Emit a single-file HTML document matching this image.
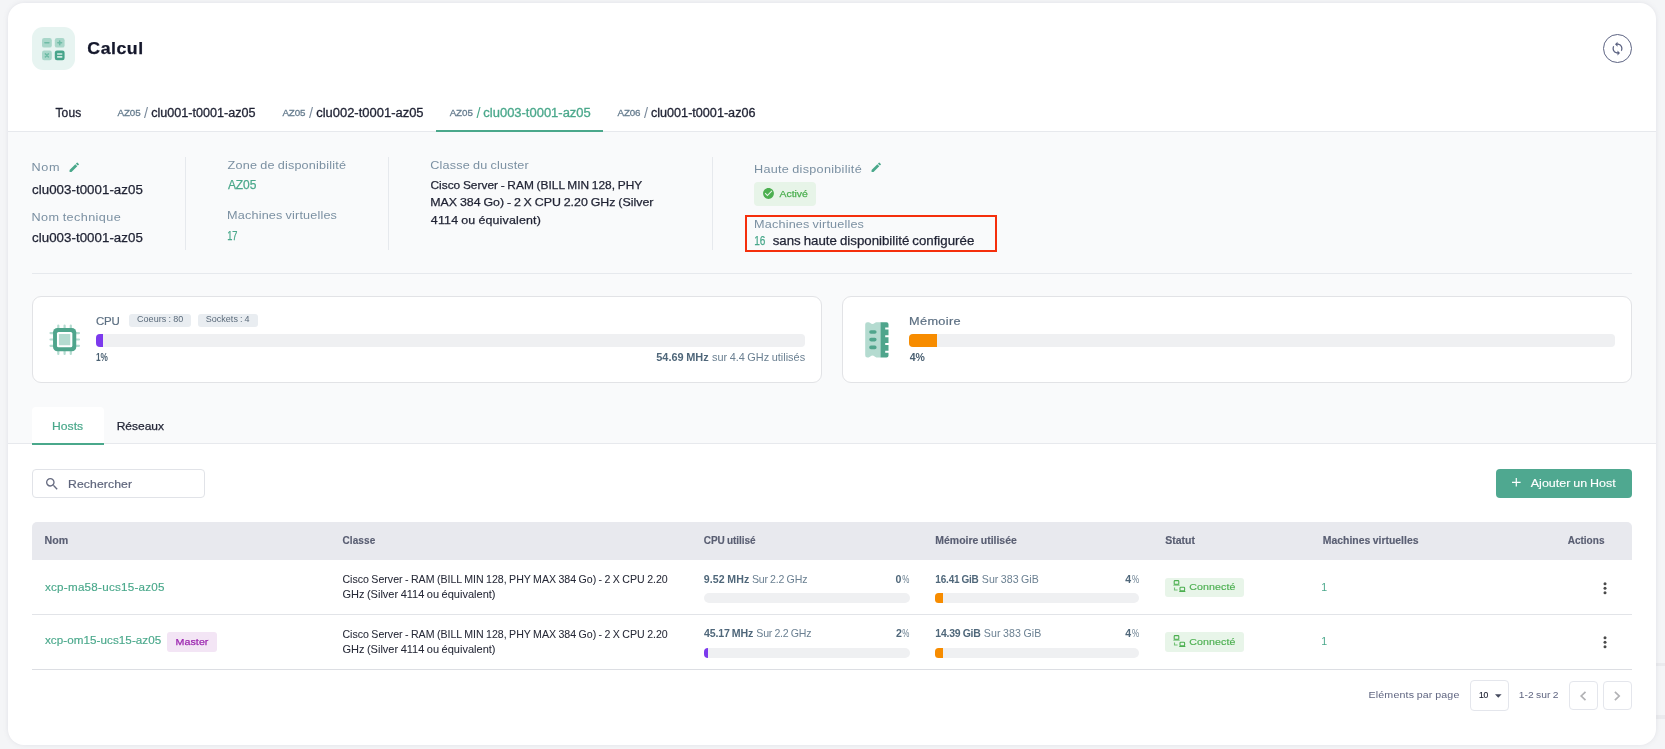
<!DOCTYPE html>
<html lang="fr"><head><meta charset="utf-8"><title>Calcul</title>
<style>
html,body{margin:0;padding:0}
body{width:1665px;height:749px;overflow:hidden;position:relative;background:#f4f5f7;font-family:"Liberation Sans",sans-serif}
.t{position:absolute;transform-origin:0 0;word-spacing:-0.05em;white-space:pre;line-height:20px;height:20px;font-family:"Liberation Sans",sans-serif}
.b{position:absolute;box-sizing:border-box}
svg{position:absolute;overflow:visible}
.txt{position:absolute;left:0;top:0;width:1665px;height:749px;will-change:transform}

</style></head><body>
<!-- page background decoration -->
<div class="b" style="left:0;top:0;width:1665px;height:749px;background:#f4f5f7"></div>
<div class="b" style="left:1650px;top:662.7px;width:15px;height:3.3px;background:#eaebee"></div>
<div class="b" style="left:1650px;top:715.4px;width:15px;height:3.4px;background:#eaebee"></div>
<!-- main card -->
<div class="b" style="left:7.75px;top:3.2px;width:1648.25px;height:741.6px;border-radius:16px;background:#fff;box-shadow:0 0 5px rgba(105,110,135,.13);overflow:hidden">
  <div class="b" style="left:0;top:128px;width:1648px;height:313px;background:#f9fafb;border-top:1px solid #e7e9ed;border-bottom:1px solid #e7e9ed"></div>
</div>
<!-- header icon -->
<div class="b" style="left:32px;top:27px;width:43px;height:43px;border-radius:11px;background:#e7f4f1"></div>
<svg style="left:42px;top:38px" width="23" height="23" viewBox="0 0 23 23">
  <rect x="0" y="0" width="9.8" height="9.6" rx="2.2" fill="#a9d7ca"/>
  <rect x="12.8" y="0" width="9.8" height="9.6" rx="2.2" fill="#a9d7ca"/>
  <rect x="0" y="12.6" width="9.8" height="9.6" rx="2.2" fill="#a9d7ca"/>
  <rect x="12.8" y="12.6" width="9.8" height="9.6" rx="2.2" fill="#48a58b"/>
  <path d="M2.9 4.8h4" stroke="#6fbca6" stroke-width="1.5" stroke-linecap="round"/>
  <path d="M15.8 4.8h3.8M17.7 2.900v3.800" stroke="#6fbca6" stroke-width="1.5" stroke-linecap="round"/>
  <path d="M3.400 15.900l3 3M6.400 15.900l-3 3" stroke="#6fbca6" stroke-width="1.5" stroke-linecap="round"/>
  <path d="M15.700 16h4M15.700 18.900h4" stroke="#d3ece5" stroke-width="1.6" stroke-linecap="round"/>
</svg>
<!-- refresh button -->
<div class="b" style="left:1603px;top:34px;width:29px;height:29px;border-radius:50%;border:1px solid #5d6483"></div>
<svg style="left:1610.1px;top:40.7px" width="15" height="15" viewBox="0 0 24 24"><path fill="#5d6483" d="M12 4V1L8 5l4 4V6c3.31 0 6 2.69 6 6 0 1.01-.25 1.97-.7 2.8l1.46 1.46C19.54 15.03 20 13.57 20 12c0-4.42-3.58-8-8-8zm0 14c-3.31 0-6-2.69-6-6 0-1.01.25-1.97.7-2.8L5.24 7.74C4.46 8.97 4 10.43 4 12c0 4.42 3.58 8 8 8v3l4-4-4-4v3z"/></svg>
<!-- active tab underline -->
<div class="b" style="left:436.25px;top:130px;width:166.75px;height:2px;background:#4aa88b"></div>
<!-- info dividers -->
<div class="b" style="left:185px;top:157px;width:1px;height:92.5px;background:#e6e9ed"></div>
<div class="b" style="left:388.25px;top:157px;width:1px;height:92.5px;background:#e6e9ed"></div>
<div class="b" style="left:712px;top:157px;width:1px;height:92.5px;background:#e6e9ed"></div>
<div class="b" style="left:32px;top:273px;width:1600px;height:1px;background:#e6e9ed"></div>
<!-- pencils -->
<svg style="left:67.5px;top:161.3px" width="12.5" height="12.5" viewBox="0 0 24 24"><path fill="#4aa88b" d="M3 17.25V21h3.75L17.81 9.94l-3.75-3.75L3 17.25zM20.71 7.04a.996.996 0 0 0 0-1.41l-2.34-2.34a.996.996 0 0 0-1.41 0l-1.83 1.83 3.75 3.75 1.83-1.83z"/></svg>
<svg style="left:869.5px;top:161.3px" width="12.5" height="12.5" viewBox="0 0 24 24"><path fill="#4aa88b" d="M3 17.25V21h3.75L17.81 9.94l-3.75-3.75L3 17.25zM20.71 7.04a.996.996 0 0 0 0-1.41l-2.34-2.34a.996.996 0 0 0-1.41 0l-1.83 1.83 3.75 3.75 1.83-1.83z"/></svg>
<!-- Activé badge -->
<div class="b" style="left:754.25px;top:182px;width:61.75px;height:24px;border-radius:4px;background:#e7f4e8"></div>
<svg style="left:762.4px;top:186.7px" width="13" height="13" viewBox="0 0 24 24"><path fill="#4caf50" d="M12 2C6.48 2 2 6.48 2 12s4.48 10 10 10 10-4.48 10-10S17.52 2 12 2zm-2 15l-5-5 1.41-1.41L10 14.17l7.59-7.59L19 8l-9 9z"/></svg>
<!-- red highlight box -->
<div class="b" style="left:745px;top:215px;width:252.25px;height:36.75px;border:2px solid #f52f0c"></div>
<!-- CPU card -->
<div class="b" style="left:32px;top:296px;width:790px;height:86.5px;border:1px solid #e2e3e6;border-radius:9px;background:#fff"></div>
<div class="b" style="left:842px;top:296px;width:790.25px;height:86.5px;border:1px solid #e2e3e6;border-radius:9px;background:#fff"></div>
<!-- CPU icon -->
<svg style="left:48.75px;top:323.75px" width="31.25" height="31.25" viewBox="0 0 31.25 31.25">
  <g stroke="#b4dbd0" stroke-width="2.2" stroke-linecap="round">
    <path d="M9.3 1.5v3M15.6 1.5v3M21.8 1.5v3M9.3 27v3M15.6 27v3M21.8 27v3"/>
    <path d="M1.5 9.1h3M1.5 15.5h3M1.5 21.8h3M27 9.1h3M27 15.5h3M27 21.8h3"/>
  </g>
  <rect x="4.05" y="4.05" width="23.2" height="23.2" rx="4.3" fill="#4fa58c"/>
  <rect x="7.95" y="7.95" width="15.4" height="15.4" rx="1.6" fill="#fff"/>
  <rect x="9.95" y="9.95" width="11.3" height="11.3" rx=".6" fill="#b4dbd0"/>
</svg>
<!-- CPU badges -->
<div class="b" style="left:129px;top:314px;width:62.25px;height:12.75px;border-radius:3px;background:#e9edf1"></div>
<div class="b" style="left:198px;top:314px;width:60px;height:12.75px;border-radius:3px;background:#e9edf1"></div>
<!-- CPU progress -->
<div class="b" style="left:96px;top:334.25px;width:709px;height:12.5px;border-radius:4px;background:#eff0f2;overflow:hidden"><div style="width:7px;height:100%;background:#7c3aed"></div></div>
<!-- Memory icon -->
<svg style="left:864.5px;top:321.5px" width="24" height="36" viewBox="0 0 24 36">
  <path d="M0.2 2.4Q0.2 0.2 2.4 0.2L3.6 0.2Q4.600 0.2 5.3 1Q7.5 3 9.7 1Q10.4 0.2 11.4 0.2L15.6 0.2L15.6 35.400L11.4 35.4Q10.4 35.4 9.7 34.6Q7.5 32.6 5.3 34.6Q4.6 35.4 3.6 35.4L2.4 35.4Q0.2 35.4 0.2 33.2Z" fill="#b4dbd0"/>
  <path d="M15.5 0.2H21.5Q23.5 0.2 23.5 2.2V5.5H20.2V7.5H23.5V13.2H20.2V15.2H23.5V21H20.2V23H23.5V28.7H20.2V30.7H23.5V33.4Q23.5 35.4 21.5 35.4H15.5Z" fill="#4fa58c"/>
  <g stroke="#4fa58c" stroke-width="3.6" stroke-linecap="round"><path d="M6 10h3.800M6 17.600h3.800M6 25.400h3.800"/></g>
</svg>
<!-- Memory progress -->
<div class="b" style="left:909.25px;top:334.25px;width:706px;height:12.5px;border-radius:4px;background:#eff0f2;overflow:hidden"><div style="width:28px;height:100%;background:#f78c00"></div></div>
<!-- sub tabs -->
<div class="b" style="left:32px;top:407px;width:72px;height:37px;border-radius:4px 4px 0 0;background:#fff"></div>
<div class="b" style="left:32px;top:442.5px;width:72px;height:2.5px;background:#4aa88b"></div>
<!-- search -->
<div class="b" style="left:32px;top:469.25px;width:173px;height:28.5px;border:1px solid #e1e3e8;border-radius:4px;background:#fff"></div>
<svg style="left:43.8px;top:475.8px" width="16" height="16" viewBox="0 0 24 24"><path fill="#666b80" d="M15.5 14h-.79l-.28-.27A6.471 6.471 0 0 0 16 9.5 6.5 6.5 0 1 0 9.500 16c1.610 0 3.090-.59 4.230-1.570l.27.28v.79l5 4.990L20.490 19l-4.990-5zm-6 0C7.010 14 5 11.990 5 9.500S7.010 5 9.500 5 14 7.010 14 9.500 11.990 14 9.500 14z"/></svg>
<!-- add button -->
<div class="b" style="left:1496px;top:469px;width:136.25px;height:29px;border-radius:4px;background:#4fa890"></div>
<svg style="left:1512px;top:477.9px" width="8.6" height="8.6" viewBox="0 0 8.6 8.6"><path d="M4.3 0v8.6M0 4.3h8.6" stroke="#fff" stroke-width="1.2"/></svg>
<!-- table header -->
<div class="b" style="left:32px;top:522px;width:1600.25px;height:37.5px;border-radius:5px 5px 0 0;background:#e8e9ee"></div>
<div class="b" style="left:32px;top:614px;width:1600px;height:1px;background:#e2e4e8"></div>
<div class="b" style="left:32px;top:669px;width:1600px;height:1px;background:#dcdee3"></div>
<!-- Master badge -->
<div class="b" style="left:167.25px;top:632.25px;width:49.75px;height:19.25px;border-radius:3px;background:#f3e5f5"></div>
<!-- row progress bars -->
<div class="b" style="left:703.75px;top:593px;width:206.25px;height:10px;border-radius:5px;background:#eff0f2"></div>
<div class="b" style="left:703.75px;top:648px;width:206.25px;height:10px;border-radius:5px;background:#eff0f2"><div style="width:4.3px;height:100%;background:#7c3aed;border-radius:4px 0 0 4px"></div></div>
<div class="b" style="left:935px;top:593px;width:204.25px;height:10px;border-radius:5px;background:#eff0f2"><div style="width:8.3px;height:100%;background:#f78c00;border-radius:3.5px 0 0 3.5px"></div></div>
<div class="b" style="left:935px;top:648px;width:204.25px;height:10px;border-radius:5px;background:#eff0f2"><div style="width:8.3px;height:100%;background:#f78c00;border-radius:3.5px 0 0 3.5px"></div></div>
<!-- Connecté badges -->
<div class="b" style="left:1165px;top:577.8px;width:79px;height:19.2px;border-radius:3px;background:#e8f5e9"></div>
<div class="b" style="left:1165px;top:632.25px;width:79px;height:19.5px;border-radius:3px;background:#e8f5e9"></div>
<svg style="left:1172.8px;top:580px" width="13" height="12.5" viewBox="0 0 13 12.5"><g fill="none" stroke="#4caf50" stroke-width="1.1"><rect x="1.2" y=".6" width="4.6" height="3.7" rx=".8"/><rect x="7" y="7.3" width="4.6" height="3.6" rx=".8"/><path d="M1.5 7.400V10H4.600" stroke-opacity=".75" stroke-width="1.1"/></g><path d="M.8 4.500h5.400l.7 1.1h-6.800zM6.600 11h5.400l.7 1.100h-6.800z" fill="#4caf50"/></svg>
<svg style="left:1172.8px;top:634.7px" width="13" height="12.5" viewBox="0 0 13 12.5"><g fill="none" stroke="#4caf50" stroke-width="1.1"><rect x="1.2" y=".6" width="4.6" height="3.7" rx=".8"/><rect x="7" y="7.3" width="4.6" height="3.6" rx=".8"/><path d="M1.5 7.400V10H4.600" stroke-opacity=".75" stroke-width="1.1"/></g><path d="M.8 4.500h5.400l.7 1.1h-6.800zM6.600 11h5.400l.7 1.100h-6.800z" fill="#4caf50"/></svg>
<!-- kebab menus -->
<svg style="left:1603px;top:581.5px" width="4" height="13" viewBox="0 0 4 13"><g fill="#4a4a4a"><circle cx="2" cy="1.8" r="1.5"/><circle cx="2" cy="6.3" r="1.5"/><circle cx="2" cy="10.8" r="1.5"/></g></svg>
<svg style="left:1603px;top:635.8px" width="4" height="13" viewBox="0 0 4 13"><g fill="#4a4a4a"><circle cx="2" cy="1.8" r="1.5"/><circle cx="2" cy="6.3" r="1.5"/><circle cx="2" cy="10.8" r="1.5"/></g></svg>
<!-- pagination -->
<div class="b" style="left:1470px;top:680px;width:38.6px;height:30.6px;border:1px solid #e4e6ec;border-radius:4px;background:#fff"></div>
<svg style="left:1494.8px;top:694px" width="6.6" height="4" viewBox="0 0 6.6 4"><path d="M0 .3h6.6L3.3 3.8z" fill="#454a5e"/></svg>
<div class="b" style="left:1569.2px;top:681.2px;width:28.5px;height:28.5px;border:1px solid #e4e6ec;border-radius:4px;background:#fff"></div>
<div class="b" style="left:1603.3px;top:681.2px;width:28.5px;height:28.5px;border:1px solid #e4e6ec;border-radius:4px;background:#fff"></div>
<svg style="left:1580px;top:690.8px" width="6.4" height="10" viewBox="0 0 6.4 10"><path d="M5.5 .8L1.200 5l4.300 4.200" fill="none" stroke="#b1b1b4" stroke-width="1.7"/></svg>
<svg style="left:1614.2px;top:690.8px" width="6.4" height="10" viewBox="0 0 6.4 10"><path d="M.9 .8L5.200 5 .9 9.200" fill="none" stroke="#b1b1b4" stroke-width="1.7"/></svg>

<div class="txt">
<span class="t" style="left:87px;padding-left:0.32px;top:38.02px;font-size:16.1px;color:#14172b;font-weight:700;letter-spacing:0.477px;transform:scaleX(1.1000);-webkit-text-stroke:0.25px #14172b;">Calcul</span>
<span class="t" style="left:55.49px;top:102.84px;font-size:12px;color:#1f2233;letter-spacing:0.117px;-webkit-text-stroke:0.3px #1f2233;">Tous</span>
<span class="t" style="left:117.47px;top:102.60px;font-size:9.8px;color:#677d8f;letter-spacing:-0.076px;-webkit-text-stroke:0.3px #677d8f;">AZ05</span>
<span class="t" style="left:143.93px;top:102.88px;font-size:14.5px;color:#7b8b9c;">/</span>
<span class="t" style="left:151px;padding-left:0.18px;top:102.84px;font-size:12px;color:#1f2233;transform:scaleX(1.0503);-webkit-text-stroke:0.3px #1f2233;">clu001-t0001-az05</span>
<span class="t" style="left:282.42px;top:102.60px;font-size:9.8px;color:#677d8f;letter-spacing:-0.145px;-webkit-text-stroke:0.3px #677d8f;">AZ05</span>
<span class="t" style="left:308.93px;top:102.88px;font-size:14.5px;color:#7b8b9c;">/</span>
<span class="t" style="left:316px;padding-left:0.16px;top:102.84px;font-size:12px;color:#1f2233;transform:scaleX(1.0804);-webkit-text-stroke:0.3px #1f2233;">clu002-t0001-az05</span>
<span class="t" style="left:449.65px;top:102.60px;font-size:9.8px;color:#677d8f;letter-spacing:-0.063px;-webkit-text-stroke:0.3px #677d8f;">AZ05</span>
<span class="t" style="left:476.43px;top:102.88px;font-size:14.5px;color:#4aa88b;">/</span>
<span class="t" style="left:483px;padding-left:0.32px;top:102.84px;font-size:12px;color:#4aa88b;transform:scaleX(1.0806);-webkit-text-stroke:0.3px #4aa88b;">clu003-t0001-az05</span>
<span class="t" style="left:617.62px;top:102.60px;font-size:9.8px;color:#677d8f;letter-spacing:-0.200px;-webkit-text-stroke:0.3px #677d8f;">AZ06</span>
<span class="t" style="left:643.93px;top:102.88px;font-size:14.5px;color:#7b8b9c;">/</span>
<span class="t" style="left:650px;padding-left:0.90px;top:102.84px;font-size:12px;color:#1f2233;transform:scaleX(1.0517);-webkit-text-stroke:0.3px #1f2233;">clu001-t0001-az06</span>
<span class="t" style="left:31px;padding-left:0.51px;top:157.02px;font-size:11.5px;color:#7b90a2;letter-spacing:0.587px;transform:scaleX(1.1000);">Nom</span>
<span class="t" style="left:32px;padding-left:0.08px;top:179.81px;font-size:12.1px;color:#1f2233;letter-spacing:0.030px;transform:scaleX(1.1000);-webkit-text-stroke:0.25px #1f2233;">clu003-t0001-az05</span>
<span class="t" style="left:31px;padding-left:0.51px;top:207.02px;font-size:11.5px;color:#7b90a2;letter-spacing:0.354px;transform:scaleX(1.1000);">Nom technique</span>
<span class="t" style="left:32px;padding-left:0.08px;top:227.81px;font-size:12.1px;color:#1f2233;letter-spacing:0.030px;transform:scaleX(1.1000);-webkit-text-stroke:0.25px #1f2233;">clu003-t0001-az05</span>
<span class="t" style="left:227px;padding-left:0.55px;top:155.27px;font-size:11.5px;color:#7b90a2;letter-spacing:0.162px;transform:scaleX(1.1000);">Zone de disponibilité</span>
<span class="t" style="left:227.97px;top:174.84px;font-size:12px;color:#4aa88b;letter-spacing:-0.117px;-webkit-text-stroke:0.25px #4aa88b;">AZ05</span>
<span class="t" style="left:227px;padding-left:0.10px;top:205.27px;font-size:11.5px;color:#7b90a2;letter-spacing:0.145px;transform:scaleX(1.1000);">Machines virtuelles</span>
<span class="t" style="left:227px;padding-left:0.46px;top:225.84px;font-size:12px;color:#4aa88b;letter-spacing:-0.200px;transform:scaleX(0.7727);-webkit-text-stroke:0.25px #4aa88b;">17</span>
<span class="t" style="left:430px;padding-left:0.27px;top:155.27px;font-size:11.5px;color:#7b90a2;letter-spacing:0.154px;transform:scaleX(1.1000);">Classe du cluster</span>
<span class="t" style="left:430px;padding-left:0.41px;top:175.08px;font-size:11.3px;color:#1f2233;transform:scaleX(1.0540);-webkit-text-stroke:0.25px #1f2233;">Cisco Server - RAM (BILL MIN 128, PHY</span>
<span class="t" style="left:430px;padding-left:0.18px;top:192.08px;font-size:11.3px;color:#1f2233;transform:scaleX(1.0981);-webkit-text-stroke:0.25px #1f2233;">MAX 384 Go) - 2 X CPU 2.20 GHz (Silver</span>
<span class="t" style="left:430px;padding-left:0.78px;top:210.08px;font-size:11.3px;color:#1f2233;letter-spacing:0.152px;transform:scaleX(1.1000);-webkit-text-stroke:0.25px #1f2233;">4114 ou équivalent)</span>
<span class="t" style="left:754px;padding-left:0.04px;top:159.02px;font-size:11.5px;color:#7b90a2;letter-spacing:0.248px;transform:scaleX(1.1000);">Haute disponibilité</span>
<span class="t" style="left:779px;padding-left:0.44px;top:183.64px;font-size:9.7px;color:#4caf50;transform:scaleX(1.0775);-webkit-text-stroke:0.25px #4caf50;">Activé</span>
<span class="t" style="left:754px;padding-left:0.10px;top:214.02px;font-size:11.5px;color:#7b90a2;letter-spacing:0.145px;transform:scaleX(1.1000);">Machines virtuelles</span>
<span class="t" style="left:754px;padding-left:0.45px;top:230.84px;font-size:12px;color:#4aa88b;letter-spacing:-0.200px;transform:scaleX(0.8389);-webkit-text-stroke:0.25px #4aa88b;">16</span>
<span class="t" style="left:772px;padding-left:0.58px;top:230.81px;font-size:12.1px;color:#1f2233;transform:scaleX(1.0973);-webkit-text-stroke:0.25px #1f2233;">sans haute disponibilité configurée</span>
<span class="t" style="left:96px;padding-left:0.03px;top:310.98px;font-size:11.6px;color:#5c6f82;letter-spacing:-0.200px;transform:scaleX(0.9898);-webkit-text-stroke:0.2px #5c6f82;">CPU</span>
<span class="t" style="left:137.00px;top:309.38px;font-size:9px;color:#5b6b7b;letter-spacing:0.058px;">Coeurs : 80</span>
<span class="t" style="left:205.73px;top:309.38px;font-size:9px;color:#5b6b7b;letter-spacing:0.027px;">Sockets : 4</span>
<span class="t" style="left:95px;padding-left:1.24px;top:346.58px;font-size:10.6px;color:#4a6072;font-weight:700;letter-spacing:-0.200px;transform:scaleX(0.7787);">1%</span>
<span class="t" style="left:656px;padding-left:0.28px;top:346.58px;font-size:10.6px;color:#4f677a;font-weight:700;transform:scaleX(1.0330);">54.69 MHz</span>
<span class="t" style="left:712px;padding-left:0.03px;top:346.58px;font-size:10.6px;color:#6b8092;transform:scaleX(1.0315);">sur 4.4 GHz utilisés</span>
<span class="t" style="left:909px;padding-left:0.02px;top:310.98px;font-size:11.6px;color:#5c6f82;letter-spacing:0.304px;transform:scaleX(1.1000);-webkit-text-stroke:0.2px #5c6f82;">Mémoire</span>
<span class="t" style="left:909px;padding-left:0.77px;top:346.58px;font-size:10.6px;color:#4a6072;font-weight:700;letter-spacing:-0.200px;transform:scaleX(0.9911);">4%</span>
<span class="t" style="left:52px;padding-left:0.07px;top:415.98px;font-size:11.6px;color:#4aa88b;transform:scaleX(1.0492);-webkit-text-stroke:0.2px #4aa88b;">Hosts</span>
<span class="t" style="left:116px;padding-left:0.63px;top:415.98px;font-size:11.6px;color:#1f2233;transform:scaleX(1.0360);-webkit-text-stroke:0.25px #1f2233;">Réseaux</span>
<span class="t" style="left:68px;padding-left:0.05px;top:473.90px;font-size:11.1px;color:#5f667c;letter-spacing:0.087px;transform:scaleX(1.1000);-webkit-text-stroke:0.2px #5f667c;">Rechercher</span>
<span class="t" style="left:1530px;padding-left:0.74px;top:472.98px;font-size:11.6px;color:#ffffff;transform:scaleX(1.0775);-webkit-text-stroke:0.12px #ffffff;">Ajouter un Host</span>
<span class="t" style="left:44px;padding-left:0.55px;top:531.03px;font-size:10px;color:#595e72;font-weight:700;transform:scaleX(1.0621);-webkit-text-stroke:0.15px #595e72;">Nom</span>
<span class="t" style="left:342.58px;top:531.03px;font-size:10px;color:#595e72;font-weight:700;letter-spacing:0.073px;-webkit-text-stroke:0.15px #595e72;">Classe</span>
<span class="t" style="left:703.78px;top:531.03px;font-size:10px;color:#595e72;font-weight:700;letter-spacing:-0.041px;-webkit-text-stroke:0.15px #595e72;">CPU utilisé</span>
<span class="t" style="left:935px;padding-left:0.32px;top:531.03px;font-size:10px;color:#595e72;font-weight:700;transform:scaleX(1.0467);-webkit-text-stroke:0.15px #595e72;">Mémoire utilisée</span>
<span class="t" style="left:1165px;padding-left:0.17px;top:531.03px;font-size:10px;color:#595e72;font-weight:700;transform:scaleX(1.0526);-webkit-text-stroke:0.15px #595e72;">Statut</span>
<span class="t" style="left:1322px;padding-left:0.75px;top:531.03px;font-size:10px;color:#595e72;font-weight:700;transform:scaleX(1.0432);-webkit-text-stroke:0.15px #595e72;">Machines virtuelles</span>
<span class="t" style="left:1567.65px;top:531.03px;font-size:10px;color:#595e72;font-weight:700;letter-spacing:0.023px;-webkit-text-stroke:0.15px #595e72;">Actions</span>
<span class="t" style="left:44px;padding-left:0.90px;top:577.33px;font-size:10.6px;color:#4aa88b;letter-spacing:0.216px;transform:scaleX(1.1000);-webkit-text-stroke:0.15px #4aa88b;">xcp-ma58-ucs15-az05</span>
<span class="t" style="left:44px;padding-left:0.90px;top:630.33px;font-size:10.6px;color:#4aa88b;letter-spacing:0.049px;transform:scaleX(1.1000);-webkit-text-stroke:0.15px #4aa88b;">xcp-om15-ucs15-az05</span>
<span class="t" style="left:175px;padding-left:0.55px;top:631.64px;font-size:9.7px;color:#9c27b0;letter-spacing:0.043px;transform:scaleX(1.1000);-webkit-text-stroke:0.25px #9c27b0;">Master</span>
<span class="t" style="left:342.48px;top:569.33px;font-size:10.6px;color:#262937;-webkit-text-stroke:0.05px #262937;">Cisco Server - RAM (BILL MIN 128, PHY MAX 384 Go) - 2 X CPU 2.20</span>
<span class="t" style="left:342px;padding-left:0.40px;top:584.33px;font-size:10.6px;color:#262937;transform:scaleX(1.0396);-webkit-text-stroke:0.05px #262937;">GHz (Silver 4114 ou équivalent)</span>
<span class="t" style="left:342.48px;top:624.33px;font-size:10.6px;color:#262937;-webkit-text-stroke:0.05px #262937;">Cisco Server - RAM (BILL MIN 128, PHY MAX 384 Go) - 2 X CPU 2.20</span>
<span class="t" style="left:342px;padding-left:0.40px;top:639.33px;font-size:10.6px;color:#262937;transform:scaleX(1.0396);-webkit-text-stroke:0.05px #262937;">GHz (Silver 4114 ou équivalent)</span>
<span class="t" style="left:703.82px;top:569.33px;font-size:10.6px;color:#4f677a;font-weight:700;letter-spacing:0.086px;">9.52 MHz</span>
<span class="t" style="left:751.90px;top:569.33px;font-size:10.6px;color:#6b8092;letter-spacing:-0.168px;">Sur 2.2 GHz</span>
<span class="t" style="left:895.55px;top:569.33px;font-size:10.6px;color:#4f677a;font-weight:700;">0</span>
<span class="t" style="left:902px;padding-left:0.44px;top:569.33px;font-size:10.6px;color:#6b8092;transform:scaleX(0.7568);">%</span>
<span class="t" style="left:704.12px;top:623.33px;font-size:10.6px;color:#4f677a;font-weight:700;letter-spacing:-0.199px;">45.17 MHz</span>
<span class="t" style="left:756.31px;top:623.33px;font-size:10.6px;color:#6b8092;letter-spacing:-0.200px;">Sur 2.2 GHz</span>
<span class="t" style="left:895.92px;top:623.33px;font-size:10.6px;color:#4f677a;font-weight:700;">2</span>
<span class="t" style="left:902px;padding-left:0.44px;top:623.33px;font-size:10.6px;color:#6b8092;transform:scaleX(0.7568);">%</span>
<span class="t" style="left:935px;padding-left:0.39px;top:569.33px;font-size:10.6px;color:#4f677a;font-weight:700;letter-spacing:-0.200px;transform:scaleX(0.9419);">16.41 GiB</span>
<span class="t" style="left:981.80px;top:569.33px;font-size:10.6px;color:#6b8092;letter-spacing:0.034px;">Sur 383 GiB</span>
<span class="t" style="left:1125.15px;top:569.33px;font-size:10.6px;color:#4f677a;font-weight:700;">4</span>
<span class="t" style="left:1131px;padding-left:1.25px;top:569.33px;font-size:10.6px;color:#6b8092;transform:scaleX(0.7555);">%</span>
<span class="t" style="left:935px;padding-left:0.32px;top:623.33px;font-size:10.6px;color:#4f677a;font-weight:700;letter-spacing:-0.200px;transform:scaleX(0.9862);">14.39 GiB</span>
<span class="t" style="left:983.80px;top:623.33px;font-size:10.6px;color:#6b8092;letter-spacing:0.079px;">Sur 383 GiB</span>
<span class="t" style="left:1125.15px;top:623.33px;font-size:10.6px;color:#4f677a;font-weight:700;">4</span>
<span class="t" style="left:1131px;padding-left:1.25px;top:623.33px;font-size:10.6px;color:#6b8092;transform:scaleX(0.7555);">%</span>
<span class="t" style="left:1189px;padding-left:0.32px;top:576.94px;font-size:9.7px;color:#4caf50;letter-spacing:0.060px;transform:scaleX(1.1000);-webkit-text-stroke:0.15px #4caf50;">Connecté</span>
<span class="t" style="left:1189px;padding-left:0.32px;top:631.84px;font-size:9.7px;color:#4caf50;letter-spacing:0.060px;transform:scaleX(1.1000);-webkit-text-stroke:0.15px #4caf50;">Connecté</span>
<span class="t" style="left:1321.30px;top:577.08px;font-size:10.6px;color:#4aa88b;">1</span>
<span class="t" style="left:1321.30px;top:631.33px;font-size:10.6px;color:#4aa88b;">1</span>
<span class="t" style="left:1368px;padding-left:0.47px;top:684.64px;font-size:9.7px;color:#5f6580;letter-spacing:0.137px;transform:scaleX(1.1000);">Eléments par page</span>
<span class="t" style="left:1478px;padding-left:1.06px;top:684.64px;font-size:9.7px;color:#1f2233;letter-spacing:-0.200px;transform:scaleX(0.8867);-webkit-text-stroke:0.2px #1f2233;">10</span>
<span class="t" style="left:1518px;padding-left:0.82px;top:684.64px;font-size:9.7px;color:#5f6580;transform:scaleX(1.0615);">1-2 sur 2</span>
</div>
</body></html>
